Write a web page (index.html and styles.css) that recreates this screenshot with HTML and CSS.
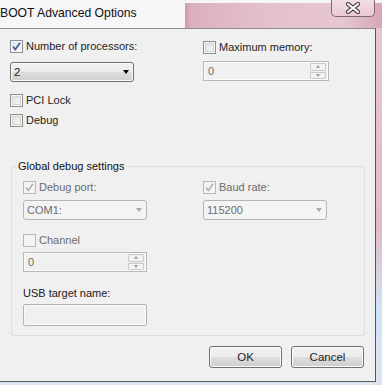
FILE: index.html
```html
<!DOCTYPE html>
<html>
<head>
<meta charset="utf-8">
<link rel="stylesheet" href="styles.css">
</head>
<body>
<div class="window">
  <div class="titlebar">
    <div class="title">BOOT Advanced Options</div>
    <div class="glass">
      <div class="close">
        <svg width="18" height="12" viewBox="0 0 18 12"><path d="M4 2 L14 10 M14 2 L4 10" stroke="#4a3a40" stroke-width="4.2" stroke-linecap="round"/><path d="M4 2 L14 10 M14 2 L4 10" stroke="#ffffff" stroke-width="2.2" stroke-linecap="round"/></svg>
      </div>
    </div>
  </div>
  <div class="client">
    <div class="top-grid">
      <div class="col">
        <label class="check"><span class="cb on"><svg width="11" height="11" viewBox="0 0 11 11"><path d="M2 5.5 L4.3 8.5 L9 1.8" fill="none" stroke="#4a5d8e" stroke-width="1.7"/></svg></span>Number of processors:</label>
        <div class="combo"><span>2</span><span class="arrow"></span></div>
      </div>
      <div class="col">
        <label class="check shift"><span class="cb"></span>Maximum memory:</label>
        <div class="spin"><span class="val">0</span><span class="spinbtns"><span class="sb"><i class="up"></i></span><span class="sb"><i class="down"></i></span></span></div>
      </div>
    </div>
    <label class="check pci"><span class="cb"></span>PCI Lock</label>
    <label class="check dbg"><span class="cb"></span>Debug</label>
    <fieldset class="group">
      <legend>Global debug settings</legend>
      <div class="group-grid">
        <div class="col">
          <label class="check dis"><span class="cb dis"><svg width="11" height="11" viewBox="0 0 11 11"><path d="M2 5.5 L4.3 8.5 L9 1.8" fill="none" stroke="#b0b0b0" stroke-width="1.6"/></svg></span>Debug port:</label>
          <div class="combo dis"><span>COM1:</span><span class="arrow"></span></div>
          <label class="check dis chan"><span class="cb dis"></span>Channel</label>
          <div class="spin small"><span class="val">0</span><span class="spinbtns"><span class="sb"><i class="up"></i></span><span class="sb"><i class="down"></i></span></span></div>
          <div class="usb-label">USB target name:</div>
          <div class="textbox"></div>
        </div>
        <div class="col">
          <label class="check dis"><span class="cb dis"><svg width="11" height="11" viewBox="0 0 11 11"><path d="M2 5.5 L4.3 8.5 L9 1.8" fill="none" stroke="#b0b0b0" stroke-width="1.6"/></svg></span>Baud rate:</label>
          <div class="combo dis"><span>115200</span><span class="arrow"></span></div>
        </div>
      </div>
    </fieldset>
    <div class="buttons">
      <div class="btn">OK</div>
      <div class="btn">Cancel</div>
    </div>
  </div>
</div>
</body>
</html>
```
FILE: styles.css
```css
html, body {
  margin: 0;
  padding: 0;
}
body {
  width: 382px;
  height: 385px;
  overflow: hidden;
  font-family: "Liberation Sans", Arial, sans-serif;
  font-size: 11px;
  color: #1e1e1e;
  background: linear-gradient(to bottom, #e7c7d3 0%, #e0bccb 60%, #cfe3f5 80%, #dbe6f2 100%);
}
.window {
  width: 382px;
}
.titlebar {
  display: grid;
  grid-template-columns: 185px 1fr;
  height: 28px;
}
.title {
  background: #f6f5f7;
  font-size: 12.2px;
  line-height: 26px;
  color: #111;
}
.glass {
  background:
    linear-gradient(to bottom, #f6f5f7 0, #f6f5f7 3px, transparent 3px),
    linear-gradient(to right, #d39aac 0, #dcb0bf 6px, #e3c0cc 40%, #e6c6d1 80%, #d8a6b6 100%);
  display: flex;
  justify-content: flex-end;
  padding-right: 7px;
}
.close {
  width: 44px;
  height: 17px;
  box-sizing: border-box;
  border: 1px solid #7d6870;
  border-top: none;
  border-radius: 0 0 5px 5px;
  background: linear-gradient(to bottom, #f2dce4, #ecc9d5);
  display: flex;
  align-items: center;
  justify-content: center;
}
.client {
  box-sizing: border-box;
  width: 376px;
  height: 354px;
  background: #f0f0f0;
  border-top: 1px solid #8d8d8d;
  border-right: 1px solid #555;
  border-bottom: 1px solid #5a5a5a;
  padding: 11px 11px 0 10px;
}
.top-grid {
  display: grid;
  grid-template-columns: 193px 126px;
}
.col {
  display: flex;
  flex-direction: column;
  align-items: flex-start;
}
.check {
  display: flex;
  align-items: center;
  gap: 3px;
  height: 13px;
  line-height: 13px;
  white-space: nowrap;
}
.check.shift {
  margin-top: 1px;
  height: 12px;
}
.check.dis {
  color: #6d6d6d;
}
.cb {
  box-sizing: border-box;
  width: 13px;
  height: 13px;
  border: 1px solid #8e8f8f;
  background: linear-gradient(135deg, #dcdcdc, #fbfbfb);
  box-shadow: inset 0 0 0 1px #f6f6f6, inset 0 0 0 2px #d4d4d4;
  display: flex;
  align-items: center;
  justify-content: center;
  flex: none;
}
.cb.on {
  background: linear-gradient(135deg, #d6e2f2, #fbfcfe);
  box-shadow: inset 0 0 0 1px #f6f6f6;
}
.cb.dis {
  border-color: #b8b8b8;
  background: #f4f4f4;
  box-shadow: none;
}
.combo {
  box-sizing: border-box;
  margin-top: 9px;
  width: 124px;
  height: 20px;
  border: 1px solid #707070;
  border-radius: 3px;
  background: linear-gradient(to bottom, #f2f2f2 0%, #ebebeb 50%, #dddddd 51%, #cfcfcf 100%);
  box-shadow: inset 0 0 0 1px #fbfbfb;
  display: flex;
  align-items: center;
  justify-content: space-between;
  padding: 0 4px 0 3px;
  font-size: 11.5px;
}
.combo .arrow {
  width: 0;
  height: 0;
  border-left: 3.5px solid transparent;
  border-right: 3.5px solid transparent;
  border-top: 4px solid #000;
  margin-right: 0;
}
.combo.dis {
  margin-top: 6px;
  border-color: #b5b5b5;
  background: #f4f4f4;
  box-shadow: none;
  color: #6d6d6d;
  font-size: 11px;
}
.combo.dis .arrow {
  border-top-color: #a8a8a8;
}
.spin {
  box-sizing: border-box;
  margin-top: 8px;
  width: 126px;
  height: 20px;
  border: 1px solid #b8b8b8;
  box-shadow: inset 0 0 0 1px #fdfdfd;
  background: #f0f0f0;
  display: flex;
  align-items: center;
  justify-content: space-between;
  padding: 1px 2px 1px 4px;
  color: #6d6d6d;
}
.spin.small {
  margin-top: 5px;
  width: 124px;
}
.spinbtns {
  display: flex;
  flex-direction: column;
  gap: 1px;
  height: 16px;
}
.sb {
  box-sizing: border-box;
  width: 16px;
  height: 8px;
  border: 1px solid #cacaca;
  border-radius: 1px;
  background: #f3f3f3;
  display: flex;
  align-items: center;
  justify-content: center;
}
.sb i {
  width: 0;
  height: 0;
  border-left: 2.5px solid transparent;
  border-right: 2.5px solid transparent;
}
.sb i.up {
  border-bottom: 3px solid #9a9a9a;
}
.sb i.down {
  border-top: 3px solid #9a9a9a;
}
.pci {
  margin-top: 12px;
}
.dbg {
  margin-top: 7px;
}
.group {
  margin: 32px 0 0 1px;
  width: 354px;
  box-sizing: border-box;
  border: 1px solid #d5dfe5;
  border-radius: 3px;
  padding: 8px 11px 9px 11px;
  min-width: 0;
}
.group legend {
  padding: 0 2px;
  margin-left: -7px;
  line-height: 14px;
  font-size: 11px;
  color: #111;
}
.group-grid {
  display: grid;
  grid-template-columns: 180px 124px;
}
.chan {
  margin-top: 14px;
}
.usb-label {
  margin-top: 14px;
  line-height: 14px;
  color: #222;
}
.textbox {
  box-sizing: border-box;
  margin-top: 4px;
  width: 124px;
  height: 22px;
  border: 1px solid #b3b3b3;
  border-radius: 2px;
  background: #f0f0f0;
  box-shadow: inset 0 0 0 1px #fbfbfb;
}
.buttons {
  display: flex;
  justify-content: flex-end;
  gap: 9px;
  margin-top: 10px;
}
.btn {
  box-sizing: border-box;
  width: 73px;
  height: 22px;
  border: 1px solid #707070;
  border-radius: 3px;
  background: linear-gradient(to bottom, #f2f2f2 0%, #ebebeb 50%, #dddddd 51%, #cfcfcf 100%);
  box-shadow: inset 0 0 0 1px #fcfcfc;
  display: flex;
  align-items: center;
  justify-content: center;
  font-size: 11.5px;
}
```
